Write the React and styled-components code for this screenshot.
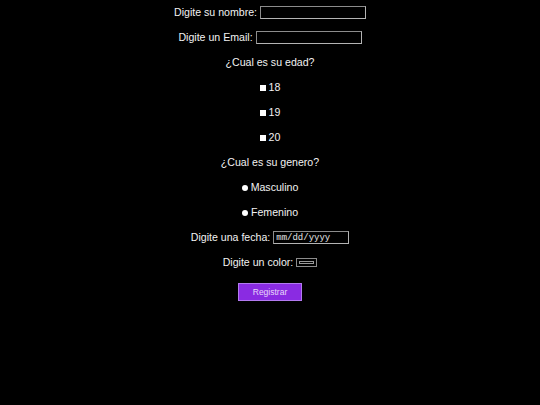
import React from "react"
import styled, { createGlobalStyle } from "styled-components"

const Global = createGlobalStyle`
  html, body {
    margin: 0;
    padding: 0;
    background: #000;
  }
  body {
    font-family: "Liberation Sans", Arial, sans-serif;
    color: #f2f2f2;
  }
`

const Form = styled.form`
  display: flex;
  flex-direction: column;
  align-items: center;
  gap: 12px;
  padding-top: 6px;
  width: 540px;
  height: 405px;
  box-sizing: border-box;
`

const Row = styled.div`
  display: flex;
  align-items: center;
  justify-content: center;
  height: 13px;
  gap: ${(p) => p.gap || 3}px;
  font-size: 10.6px;
  line-height: 13px;
  white-space: nowrap;
`

const Field = styled.input`
  box-sizing: border-box;
  width: ${(p) => p.w}px;
  height: 13px;
  margin: 0;
  padding: 0 2px;
  background: #000;
  border: 1px solid #8c8c8c;
  border-right-color: #b4b4b4;
  border-bottom-color: #b4b4b4;
  color: #ddd;
  font-family: "Liberation Mono", monospace;
  font-size: 9px;
  outline: none;

  &::placeholder {
    color: #e6e6e6;
    opacity: 1;
  }
`

const Check = styled.span`
  width: 6px;
  height: 6px;
  background: #fff;
  border-radius: ${(p) => (p.round ? "50%" : "0")};
  display: inline-block;
`

const Swatch = styled.span`
  box-sizing: border-box;
  width: 21px;
  height: 9px;
  border: 1px solid #8c8c8c;
  padding: 2px;
  display: inline-flex;

  &::after {
    content: "";
    flex: 1;
    border: 1px solid #9a9a9a;
  }
`

const Button = styled.button`
  margin-top: 2px;
  width: 64px;
  height: 18px;
  padding: 0;
  background: #8a2be2;
  border: 1px solid #b27af0;
  color: #e8d8fa;
  font-family: "Liberation Sans", Arial, sans-serif;
  font-size: 8.5px;
`

const ages = ["18", "19", "20"]
const genders = ["Masculino", "Femenino"]

export default function App() {
  return (
    <>
      <Global />
      <Form onSubmit={(e) => e.preventDefault()}>
        <Row>
          <span>Digite su nombre:</span>
          <Field w={106} />
        </Row>
        <Row>
          <span>Digite un Email:</span>
          <Field w={106} />
        </Row>
        <Row>¿Cual es su edad?</Row>
        {ages.map((a) => (
          <Row key={a}>
            <Check />
            <span>{a}</span>
          </Row>
        ))}
        <Row>¿Cual es su genero?</Row>
        {genders.map((g) => (
          <Row key={g}>
            <Check round />
            <span>{g}</span>
          </Row>
        ))}
        <Row>
          <span>Digite una fecha:</span>
          <Field w={76} placeholder="mm/dd/yyyy" />
        </Row>
        <Row>
          <span>Digite un color:</span>
          <Swatch />
        </Row>
        <Button type="submit">Registrar</Button>
      </Form>
    </>
  )
}
